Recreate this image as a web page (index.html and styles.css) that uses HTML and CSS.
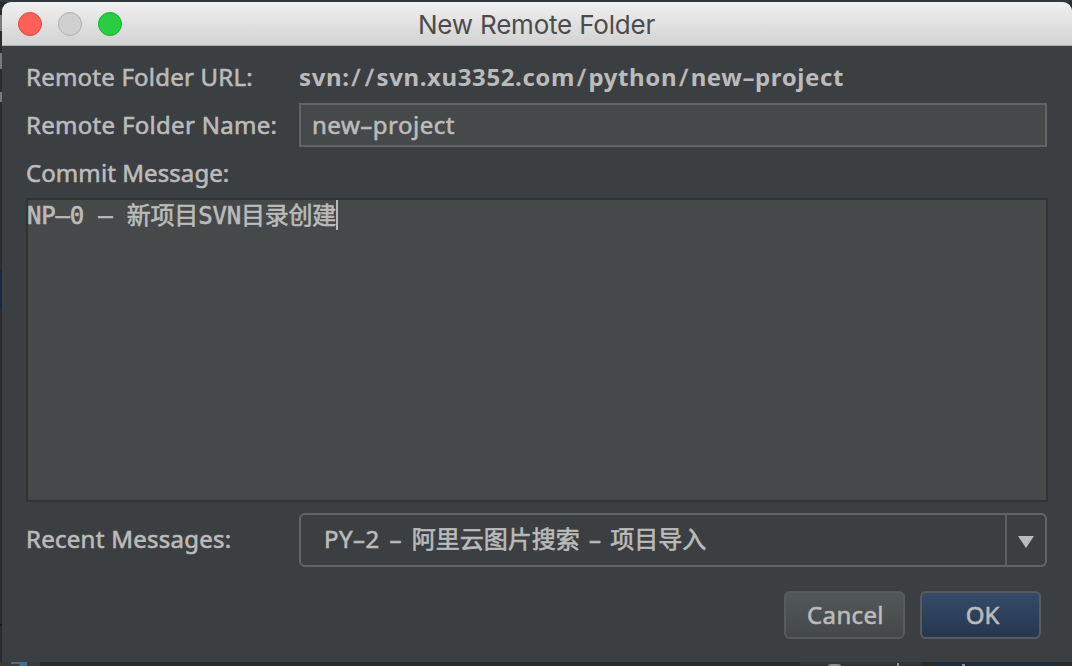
FILE: index.html
```html
<!DOCTYPE html>
<html lang="en">
<head>
<meta charset="utf-8">
<title>New Remote Folder</title>
<link rel="stylesheet" href="styles.css">
</head>
<body>
<div class="backdrop" aria-hidden="true">
  <svg width="1072" height="666" viewBox="0 0 1072 666">
    <path d="M0 0h1072v666H0z" fill="#292b2d"/>
    <path d="M0 0h1072v2H0z" fill="#35383a"/>
    <path d="M0 15h2v16H0zM0 53h2v16H0zM0 92h2v10H0z" fill="#777b7d"/>
    <path d="M0 270h2v38H0z" fill="#172840"/>
    <path d="M0 624h2v2H0z" fill="#151617"/>
    <path d="M0 662h40v4H0z" fill="#3a3a3b"/>
    <path d="M11 662h16v4h-7l-1-2h-8z" fill="#426f97"/>
    <path d="M800 662h121v4H800z" fill="#343434"/>
    <path d="M937 662h119v4H937z" fill="#1d2c42"/>
    <path d="M828 666q0-2 4-2h5q4 0 4 2zM897 663h2v3h-2zM962 664h3v2h-3z" fill="#8d8d8d"/>
  </svg>
</div>
<main class="dialog">
  <header class="titlebar">
    <div class="lights"><i class="light close"></i><i class="light minimize"></i><i class="light expand"></i></div>
    <h1 class="title">New Remote Folder</h1>
  </header>
  <div class="content">
    <div class="row url-row">
      <span class="label l-url">Remote Folder URL:</span>
      <strong class="url">svn:<span class="slash">/</span><span class="slash">/</span>svn.xu3352.com<span class="slash">/</span>python<span class="slash">/</span>new–project</strong>
    </div>
    <div class="row name-row">
      <span class="label l-name">Remote Folder Name:</span>
      <div class="field"><span class="name">new–project</span></div>
    </div>
    <div class="row message-row"><span class="label l-commit">Commit Message:</span></div>
    <div class="message"><span class="message-text">NP–0 – 新项目SVN目录创建</span><i class="caret"></i></div>
    <div class="row recent-row">
      <span class="label l-recent">Recent Messages:</span>
      <div class="select">
        <span class="value"><span class="ticket">PY–2 – </span>阿里云图片搜索 – 项目导入</span>
        <span class="arrow"><svg width="16" height="12" viewBox="0 0 16 12"><path d="M0 0h16L8 12z" fill="#bbb"/></svg></span>
      </div>
    </div>
    <div class="actions">
      <div class="button"><span class="cancel-text">Cancel</span></div>
      <div class="button primary"><span class="ok-text">OK</span></div>
    </div>
  </div>
</main>
</body>
</html>
```

FILE: styles.css
```css
* { box-sizing: border-box; }
body {
  margin: 0;
  width: 1072px;
  height: 666px;
  overflow: hidden;
  padding: 2px 0 0 2px;
  font: 24px/32px "Noto Sans", "Noto Sans CJK SC", sans-serif;
  color: #bbb;
}
.backdrop { position: absolute; inset: 0; z-index: -1; }
.backdrop svg { display: block; }
.dialog {
  width: 1070px;
  height: 660px;
  background: #3c3f41;
  border-radius: 9px 9px 0 0;
  overflow: hidden;
}
.titlebar {
  height: 44px;
  display: grid;
  grid-template-columns: 120px 1fr 120px;
  align-items: center;
  padding: 0 17px 0 16px;
  background: linear-gradient(#f0f0f0, #d2d2d2);
  border-bottom: 1px solid #b0b0b0;
}
.lights { display: flex; gap: 16px; }
.light { width: 24px; height: 24px; border-radius: 50%; border: 1px solid; }
.close { background: #ff6059; border-color: #e2463f; }
.minimize { background: #d0d0d0; border-color: #b0b0b0; }
.expand { background: #29ce42; border-color: #1dad2b; }
.title {
  margin: 2px 0 0;
  text-align: center;
  font: 400 26px/36px Inter, sans-serif;
  letter-spacing: -0.2px;
  color: #4c4c4c;
  white-space: nowrap;
}
.content { padding: 7px 25px 0 24px; -webkit-text-stroke: 0.6px #bbb; }
.row { display: grid; grid-template-columns: 273px 1fr; align-items: center; white-space: nowrap; }
.url-row { height: 48px; }
.name-row { height: 48px; }
.message-row { height: 49px; align-items: start; padding-top: 8px; }
.l-url { letter-spacing: 0.22px; }
.l-name { letter-spacing: 0.3px; }
.l-commit { letter-spacing: 0.08px; }
.l-recent { letter-spacing: 0.27px; padding-bottom: 2px; }
.url { font-weight: 700; letter-spacing: 0.6px; -webkit-text-stroke: 0; }
.slash { font-weight: 400; padding: 0 2px; -webkit-text-stroke: 0.6px #bbb; }
.name { letter-spacing: 0.5px; }
.field {
  height: 44px;
  display: flex;
  align-items: center;
  padding-left: 11px;
  background: #45494a;
  border: 2px solid #646464;
}
.message {
  width: 1022px;
  height: 304px;
  display: flex;
  align-items: flex-start;
  background: #45494a;
  border: 2px solid #323232;
  font: 24px/30px "DejaVu Sans Mono", "Noto Sans CJK SC", monospace;
  white-space: pre;
}
.message-text { margin: 1px 0 0 -1px; letter-spacing: -0.2px; }
.caret { width: 2px; height: 30px; background: #bbb; }
.recent-row { height: 54px; margin-top: 11px; }
.select {
  height: 54px;
  display: flex;
  align-items: center;
  justify-content: space-between;
  border: 2px solid #646464;
  border-radius: 6px;
}
.value { padding: 0 0 2px 23px; word-spacing: 3px; }
.ticket { letter-spacing: 0.5px; }
.arrow {
  width: 40px;
  height: 50px;
  display: grid;
  place-items: center;
  padding-top: 4px;
  border-left: 2px solid #5d5f60;
}
.actions { display: flex; justify-content: flex-end; gap: 15px; margin-top: 24px; padding-right: 6px; }
.button {
  width: 121px;
  height: 48px;
  display: grid;
  place-items: center;
  border: 2px solid #5a5c5c;
  border-radius: 6px;
  background: linear-gradient(#525758, #444849);
}
.primary { background: linear-gradient(#344b69, #26364f); }
.cancel-text { letter-spacing: 0.35px; padding-left: 2px; }
.ok-text { padding-left: 4px; }
```
